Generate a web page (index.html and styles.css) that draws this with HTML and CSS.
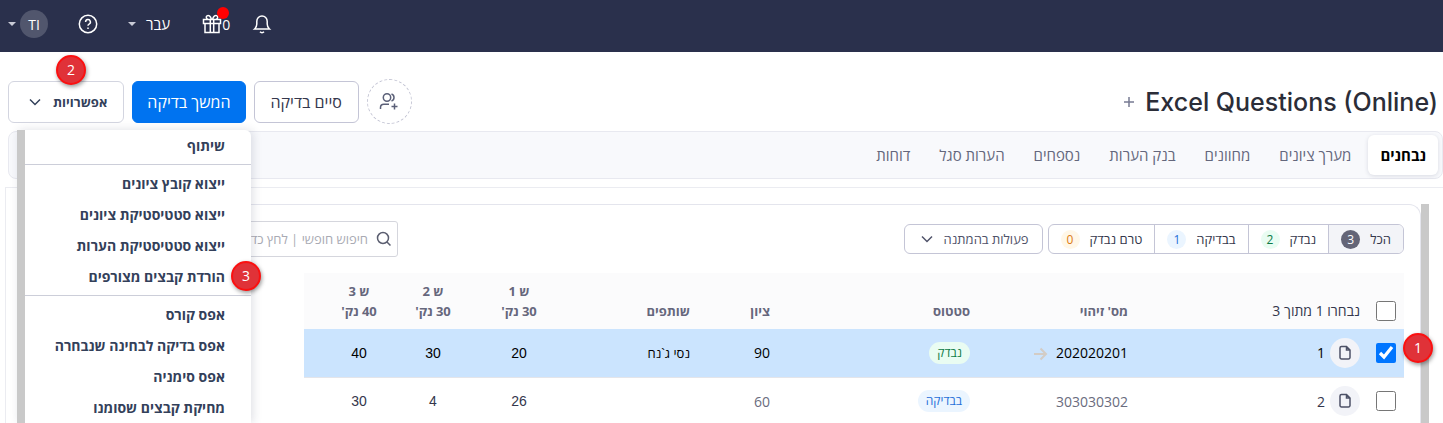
FILE: index.html
```html
<!DOCTYPE html>
<html lang="he" dir="rtl">
<head>
    <meta charset="UTF-8">
    <meta name="viewport" content="width=device-width, initial-scale=1.0">
    <title>Excel Questions (Online)</title>
    <link rel="stylesheet" href="styles.css">
</head>
<body>
    <header class="topbar">
        <button class="top-btn bell" aria-label="התראות">
            <svg width="20" height="20" viewBox="0 0 20 20"><path d="M2.6 15h14.8c-1.6-1.4-2.2-3-2.2-5V7.200a5.200 5.200 0 0 0-10.400 0V10c0 2-.6 3.600-2.200 5zM8 17.800c1 1.100 3 1.100 4 0"/></svg>
        </button>
        <button class="top-btn gift" aria-label="חדשות">
            <span>0</span>
            <svg width="20" height="20" viewBox="0 0 20 20"><path d="M1.500 5.500h17v4h-17zM3 9.500v9h14v-9M8.300 5.500v13M11.700 5.500v13M9.500 5.500C8.500 2 6.500.8 5 1.800S4.500 5 6 5.500M10.500 5.500C11.500 2 13.500.8 15 1.800S15.500 5 14 5.500"/></svg>
            <i class="dot"></i>
        </button>
        <button class="top-btn lang">עבר <i class="caret"></i></button>
        <button class="top-btn help" aria-label="עזרה">
            <svg width="20" height="20" viewBox="0 0 20 20"><circle cx="10" cy="10" r="8.700"/><path d="M7.600 8a2.400 2.400 0 1 1 3.500 2.100c-.8.4-1.100.8-1.100 1.600M10 13.500v1.400"/></svg>
        </button>
        <button class="top-btn user"><span class="avatar">TI</span><i class="caret"></i></button>
    </header>

    <div class="title-row">
        <h1 dir="ltr">Excel Questions (Online)</h1>
        <button class="add" aria-label="הוספה">
            <svg width="12" height="12" viewBox="0 0 12 12"><path d="M6 1v10M1 6h10"/></svg>
        </button>
        <div class="actions">
            <button class="add-user" aria-label="הוספת משתמש">
                <svg width="20" height="20" viewBox="0 0 20 20"><circle cx="8" cy="5.500" r="3.700"/><path d="M12.500 2a3.700 3.700 0 0 1 0 7M1.500 17v-1.500c0-2 1.400-3.300 3.300-3.300H10M15.500 11.500v6M12.500 14.500h6"/></svg>
            </button>
            <button class="btn">סיים בדיקה</button>
            <button class="btn primary">המשך בדיקה</button>
            <div class="dropdown">
                <button class="btn options">אפשרויות
                    <svg width="14" height="14" viewBox="0 0 14 14"><path d="M2 4.500l5 5 5-5"/></svg>
                </button>
                <span class="step step-2">2</span>
                <ul class="menu">
                    <li><a href="#">שיתוף</a></li>
                    <li class="sep"></li>
                    <li><a href="#">ייצוא קובץ ציונים</a></li>
                    <li><a href="#">ייצוא סטטיסטיקת ציונים</a></li>
                    <li><a href="#">ייצוא סטטיסטיקת הערות</a></li>
                    <li><a href="#">הורדת קבצים מצורפים</a><span class="step step-3">3</span></li>
                    <li class="sep"></li>
                    <li><a href="#">אפס קורס</a></li>
                    <li><a href="#">אפס בדיקה לבחינה שנבחרה</a></li>
                    <li><a href="#">אפס סימניה</a></li>
                    <li><a href="#">מחיקת קבצים שסומנו</a></li>
                </ul>
            </div>
        </div>
    </div>

    <nav class="tabs">
        <a href="#" class="active">נבחנים</a>
        <a href="#">מערך ציונים</a>
        <a href="#">מחוונים</a>
        <a href="#">בנק הערות</a>
        <a href="#">נספחים</a>
        <a href="#">הערות סגל</a>
        <a href="#">דוחות</a>
    </nav>

    <main class="content">
        <div class="scrollbar"></div>
        <section class="panel">
            <div class="toolbar">
                <div class="filters">
                    <button class="on">הכל <span class="count dark">3</span></button>
                    <button>נבדק <span class="count green">2</span></button>
                    <button>בבדיקה <span class="count blue">1</span></button>
                    <button>טרם נבדק <span class="count orange">0</span></button>
                </div>
                <button class="pending">פעולות בהמתנה
                    <svg width="14" height="14" viewBox="0 0 14 14"><path d="M2 4.500l5 5 5-5"/></svg>
                </button>
                <div class="search">
                    <svg width="16" height="16" viewBox="0 0 16 16"><circle cx="7" cy="7" r="5.500"/><path d="M11 11l3.500 3.500"/></svg>
                    <input type="text" aria-label="חיפוש" placeholder="חיפוש חופשי | לחץ כדי לסנן">
                </div>
            </div>

            <table>
                <colgroup>
                    <col>
                    <col class="c-id">
                    <col class="c-status">
                    <col class="c-grade">
                    <col class="c-partners">
                    <col class="c-q1">
                    <col class="c-q2">
                    <col class="c-q3">
                    <col class="c-end">
                </colgroup>
                <thead>
                    <tr>
                        <th class="pick">
                            <label class="row-pick"><input type="checkbox"> נבחרו 1 מתוך 3</label>
                        </th>
                        <th>מס' זיהוי</th>
                        <th>סטטוס</th>
                        <th>ציון</th>
                        <th>שותפים</th>
                        <th class="q">ש 1<br>30 נק'</th>
                        <th class="q">ש 2<br>30 נק'</th>
                        <th class="q">ש 3<br>40 נק'</th>
                        <th></th>
                    </tr>
                </thead>
                <tbody>
                    <tr class="selected">
                        <td class="pick">
                            <div class="row-pick">
                                <input type="checkbox" aria-label="בחירת נבחן 1" checked>
                                <button class="file" aria-label="פתיחת קובץ"><svg width="14" height="16" viewBox="0 0 14 16"><path d="M8.500 1.500H3.500a1.500 1.500 0 0 0-1.500 1.500v9.500A1.500 1.500 0 0 0 3.500 14h7a1.500 1.500 0 0 0 1.500-1.500V5zM8.500 1.500V5H12"/></svg></button>
                                <span>1</span>
                            </div>
                            <span class="step step-1">1</span>
                        </td>
                        <td class="num">202020201 <svg class="arrow" width="15" height="14" viewBox="0 0 15 14"><path d="M1 7h12M7.500 1.500L13 7l-5.500 5.500"/></svg></td>
                        <td><span class="tag green">נבדק</span></td>
                        <td class="num">90</td>
                        <td class="name">נסי ג`נח</td>
                        <td class="q">20</td>
                        <td class="q">30</td>
                        <td class="q">40</td>
                        <td></td>
                    </tr>
                    <tr>
                        <td class="pick">
                            <div class="row-pick">
                                <input type="checkbox" aria-label="בחירת נבחן 2">
                                <button class="file" aria-label="פתיחת קובץ"><svg width="14" height="16" viewBox="0 0 14 16"><path d="M8.500 1.500H3.500a1.500 1.500 0 0 0-1.500 1.500v9.500A1.500 1.500 0 0 0 3.500 14h7a1.500 1.500 0 0 0 1.500-1.500V5zM8.500 1.500V5H12"/></svg></button>
                                <span>2</span>
                            </div>
                        </td>
                        <td class="num">303030302</td>
                        <td><span class="tag blue">בבדיקה</span></td>
                        <td class="num">60</td>
                        <td class="name"></td>
                        <td class="q">26</td>
                        <td class="q">4</td>
                        <td class="q">30</td>
                        <td></td>
                    </tr>
                </tbody>
            </table>
        </section>
    </main>
</body>
</html>
```
FILE: styles.css
```css
* {
    box-sizing: border-box;
}

body {
    margin: 0;
    height: 100vh;
    overflow: hidden;
    display: flex;
    flex-direction: column;
    font-family: "Open Sans", "Noto Sans", "Liberation Sans", sans-serif;
    font-size: 14px;
    color: #34374c;
    background: #fff;
}

button,
input {
    font: inherit;
    color: inherit;
}

button {
    padding: 0;
    border: none;
    background: none;
    cursor: pointer;
}

a {
    color: inherit;
    text-decoration: none;
}

svg {
    display: block;
    flex: none;
    fill: none;
    stroke: currentColor;
    stroke-width: 1.5;
}

/* Top bar */
.topbar {
    flex: none;
    display: flex;
    justify-content: flex-end;
    align-items: center;
    height: 52px;
    padding: 0 8px 4px;
    background: #2a304c;
    color: #fff;
}

.top-btn {
    position: relative;
    display: flex;
    align-items: center;
}

.gift {
    margin-right: 22px;
}

.dot {
    position: absolute;
    top: -7px;
    right: 1px;
    width: 12px;
    height: 12px;
    border-radius: 50%;
    background: #f00;
}

.lang {
    gap: 10px;
    margin-right: 32px;
    font-size: 15px;
}

.help {
    margin-right: 30px;
}

.user {
    gap: 4px;
    margin-right: 30px;
}

.avatar {
    display: flex;
    align-items: center;
    justify-content: center;
    width: 28px;
    height: 28px;
    border-radius: 50%;
    background: #51566d;
}

.caret {
    border: 4px solid transparent;
    border-top-color: #c8cad6;
    border-bottom: none;
}

/* Title and actions */
.title-row {
    flex: none;
    display: flex;
    align-items: center;
    height: 79px;
    padding: 20px 5px 0 8px;
}

h1 {
    margin: 0;
    font-size: 25px;
    font-weight: 500;
    font-family: "Inter", "Open Sans", sans-serif;
    line-height: 36px;
    color: #2b2d38;
}

.add {
    margin-right: 10px;
    color: #777b93;
}

.actions {
    display: flex;
    align-items: center;
    gap: 8px;
    margin-right: auto;
}

.add-user {
    display: flex;
    align-items: center;
    justify-content: center;
    width: 45px;
    height: 45px;
    border: 1px dashed #c4c5d4;
    border-radius: 50%;
    color: #5b6078;
}

.btn {
    display: flex;
    align-items: center;
    height: 42px;
    padding: 0 16px;
    border: 1px solid #c4c5d6;
    border-radius: 6px;
    background: #fff;
    font-size: 16px;
}

.primary {
    padding: 0 14px;
    border-color: #0073f0;
    background: #0073f0;
    color: #fff;
}

.options {
    gap: 11px;
    padding: 0 16px 0 19px;
    border-color: #d3d5e0;
    font-size: 13px;
    font-weight: 700;
    color: #33405a;
}

/* Options menu */
.dropdown {
    position: relative;
}

.menu {
    position: absolute;
    z-index: 2;
    top: 49px;
    left: 9px;
    width: 234px;
    height: 293px;
    margin: 0;
    padding: 0;
    overflow: visible;
    list-style: none;
    border-left: 8px solid #c9c9c9;
    border-radius: 0 6px 0 0;
    background: #fff;
    box-shadow: 2px 0 10px rgba(40, 45, 80, 0.15);
    font-weight: 700;
    color: #33405a;
}

.menu li {
    position: relative;
}

.menu a {
    display: block;
    padding: 0 26px;
    line-height: 31px;
    white-space: nowrap;
}

.menu .sep {
    height: 1px;
    margin: 3px 0;
    background: #ccced9;
}

/* Numbered callouts */
.step {
    position: absolute;
    z-index: 3;
    width: 30px;
    height: 30px;
    border: 2px solid #fb1010;
    border-radius: 50%;
    background: #e03238;
    box-shadow: 1px 2px 4px rgba(0, 0, 0, 0.4);
    color: #fff;
    font-size: 14px;
    font-weight: 400;
    line-height: 26px;
    text-align: center;
}

.step-1 {
    top: 4px;
    right: -29px;
}

.step-2 {
    top: -26px;
    left: 48px;
}

.step-3 {
    top: 0;
    right: -10px;
}

/* Tabs */
.tabs {
    flex: none;
    display: flex;
    gap: 5px;
    height: 48px;
    margin-left: 8px;
    padding: 3px 4px;
    border: 1px solid #e8e9f0;
    border-radius: 8px;
    background: #f8f9fc;
    color: #64677c;
    font-size: 15px;
}

.tabs a {
    padding: 0 12px;
    border-radius: 6px;
    line-height: 40px;
}

.tabs .active {
    background: #fff;
    box-shadow: 0 1px 4px rgba(40, 45, 80, 0.15);
    color: #000;
    font-weight: 700;
}

/* Content */
.content {
    flex: 1;
    display: flex;
    min-height: 0;
    margin: 8px 0 0 5px;
    padding: 16px 14px 0 12px;
    border: solid #ebecf1;
    border-width: 1px 0 0 1px;
}

.scrollbar {
    width: 8px;
    background: #c9c9c9;
}

.panel {
    flex: 1;
    padding: 16px 16px 0;
    border: 1px solid #e4e5ed;
    border-bottom: none;
    border-radius: 12px 12px 0 0;
}

.toolbar {
    display: flex;
    align-items: center;
    gap: 5px;
    height: 36px;
    font-size: 13px;
}

.filters {
    display: flex;
    border: 1px solid #c4c5d6;
    border-radius: 6px;
    overflow: hidden;
}

.filters button {
    display: flex;
    align-items: center;
    gap: 10px;
    height: 28px;
    padding: 0 12px;
}

.filters button + button {
    border-right: 1px solid #c4c5d6;
}

.filters .on {
    background: #f3f4f8;
}

.count {
    width: 19px;
    border-radius: 50%;
    font-size: 12px;
    line-height: 19px;
    text-align: center;
}

.dark {
    background: #646577;
    color: #fff;
}

.green {
    background: #e9fcf2;
    color: #0b7a45;
}

.blue {
    background: #ebf5ff;
    color: #1f6fd8;
}

.orange {
    background: #fff7e8;
    color: #dd7a12;
}

.pending {
    display: flex;
    align-items: center;
    gap: 10px;
    height: 30px;
    padding: 0 13px 0 15px;
    border: 1px solid #c4c5d6;
    border-radius: 6px;
    color: #50536a;
}

.search {
    display: flex;
    align-items: center;
    gap: 8px;
    width: 250px;
    height: 36px;
    margin: 0 auto 0 113px;
    padding: 0 5px;
    border: 1px solid #d5d6dd;
    border-radius: 3px;
    color: #5b5e70;
}

.search input {
    flex: 1;
    min-width: 0;
    padding: 0;
    border: none;
    outline: none;
}

.search input::placeholder {
    color: #a9aab3;
}

/* Students table */
table {
    width: calc(100% - 269px);
    margin-top: 16px;
    border-collapse: collapse;
    table-layout: fixed;
}

.c-id { width: 158px; }
.c-status { width: 200px; }
.c-grade { width: 80px; }
.c-partners { width: 137px; }
.c-q1 { width: 92px; }
.c-q2 { width: 80px; }
.c-q3 { width: 68px; }
.c-end { width: 21px; }

th,
td {
    padding: 0 12px 0 0;
    text-align: right;
    white-space: nowrap;
}

th {
    height: 56px;
    padding-bottom: 8px;
    vertical-align: bottom;
    line-height: 20px;
    font-size: 13px;
    font-weight: 700;
    color: #66677c;
    background: #fbfbfc;
}

td {
    height: 48px;
    border-bottom: 1px solid #e4e5ea;
}

.q {
    padding-right: 0;
    text-align: center;
}

td.q {
    font-family: "Liberation Sans", sans-serif;
}

.name {
    font-size: 13px;
}

.pick {
    position: relative;
    padding-right: 8px;
    font-size: 14px;
    font-weight: 400;
    color: #34374c;
}

.row-pick {
    display: flex;
    align-items: center;
}

.row-pick input {
    width: 20px;
    height: 20px;
    margin: 0 0 0 16px;
    accent-color: #0075ff;
}

.file {
    display: flex;
    align-items: center;
    justify-content: center;
    width: 30px;
    height: 30px;
    margin-left: 5px;
    border-radius: 50%;
    background: #f2f3f8;
    color: #4d5267;
}

.num {
    color: #6a6c7e;
}

.selected {
    background: #cbe4fe;
}

.selected td {
    color: #000;
}

.arrow {
    display: inline-block;
    margin-right: 4px;
    vertical-align: -3px;
    color: #d3ccc5;
    stroke-width: 2;
}

.tag {
    display: inline-block;
    padding: 0 8px;
    border-radius: 11px;
    font-size: 12px;
    line-height: 22px;
}
```
